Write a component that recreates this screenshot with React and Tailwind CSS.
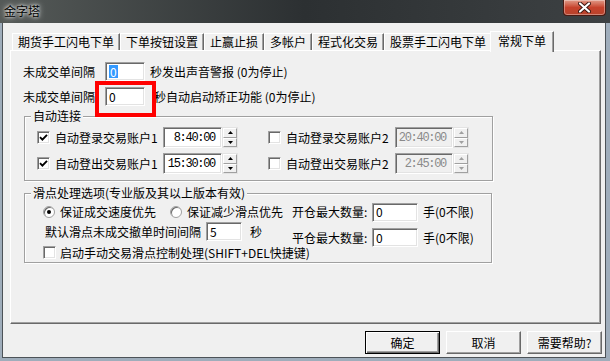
import React from "react";

const sunken =
  "bg-white border border-t-[#a0a0a0] border-l-[#a0a0a0] border-b-white border-r-white shadow-[inset_1px_1px_0_#696969,inset_-1px_-1px_0_#e3e3e3]";

function Check({ checked }) {
  return (
    <span className={"w-[13px] h-[13px] flex items-center justify-center shrink-0 " + sunken}>
      {checked && (
        <svg width="9" height="9" viewBox="0 0 9 9">
          <path d="M1 4.2 L3.4 6.6 L8 1.8" stroke="#000" strokeWidth="1.9" fill="none" />
        </svg>
      )}
    </span>
  );
}

function Radio({ checked }) {
  return (
    <span className="w-[12px] h-[12px] rounded-full bg-white border border-[#a0a0a0] shadow-[inset_1px_1px_0_#696969] flex items-center justify-center shrink-0">
      {checked && <span className="w-[4px] h-[4px] rounded-full bg-black" />}
    </span>
  );
}

function Spin({ disabled }) {
  const c = disabled ? "#a0a0a0" : "#000";
  const btn =
    "flex-1 flex items-center justify-center bg-[#f0f0f0] border border-t-white border-l-white border-r-[#a0a0a0] border-b-[#a0a0a0]";
  return (
    <div className="w-[16px] h-[21px] flex flex-col shrink-0 border border-[#e3e3e3]">
      <div className={btn}>
        <svg width="5" height="3" viewBox="0 0 5 3">
          <path d="M0 3 L2.5 0 L5 3 Z" fill={c} />
        </svg>
      </div>
      <div className={btn}>
        <svg width="5" height="3" viewBox="0 0 5 3">
          <path d="M0 0 L2.5 3 L5 0 Z" fill={c} />
        </svg>
      </div>
    </div>
  );
}

function TimeBox({ value, disabled, w }) {
  return (
    <div
      className={
        "h-[21px] flex items-center justify-end pr-[6px] font-['Liberation_Mono',monospace] text-[12px] tracking-[-1.3px] border border-t-[#a0a0a0] border-l-[#a0a0a0] border-b-white border-r-white shadow-[inset_1px_1px_0_#696969,inset_-1px_-1px_0_#e3e3e3] " +
        (disabled ? "bg-[#f0f0f0] text-[#8a8a8a] " : "bg-white text-black ") +
        w
      }
    >
      {value}
    </div>
  );
}

function Tab({ label, active }) {
  if (active) {
    return (
      <div className="relative z-10 h-[21px] -mb-[2px] -ml-[2px] -mr-[2px] px-[7px] pt-[2px] bg-[#f0f0f0] border border-b-0 border-t-white border-l-white border-r-[#696969] shadow-[inset_-1px_0_0_#a0a0a0] leading-[14px]">
        {label}
      </div>
    );
  }
  return (
    <div className="h-[17px] px-[5px] pt-[1px] bg-[#f0f0f0] border border-b-0 border-t-white border-l-white border-r-[#696969] shadow-[inset_-1px_0_0_#a0a0a0] leading-[14px]">
      {label}
    </div>
  );
}

function Button({ label, def }) {
  return (
    <div
      className={
        "w-[75px] h-[23px] flex items-center justify-center bg-[#f0f0f0] leading-[14px] " +
        (def
          ? "border border-[#000] shadow-[inset_1px_1px_0_#fff,inset_-1px_-1px_0_#696969,inset_-2px_-2px_0_#a0a0a0]"
          : "border border-t-white border-l-white border-b-[#696969] border-r-[#696969] shadow-[inset_-1px_-1px_0_#a0a0a0]")
      }
    >
      {label}
    </div>
  );
}

export default function App() {
  return (
    <div className="w-[610px] h-[361px] overflow-hidden bg-[#9fadbb] flex flex-col text-[12px] leading-[14px] text-black font-['Noto_Sans_CJK_SC','Liberation_Sans',sans-serif]">
      {/* Title bar */}
      <div className="h-[23px] flex justify-between bg-gradient-to-r from-[#555a58] via-[#2c3032] to-[#3d4143] shrink-0">
        <span className="pl-[4px] pt-[3px] leading-[16px] [text-shadow:0_0_6px_#fff,0_0_3px_#fff]">金字塔</span>
        <div className="w-[43px] h-[16px] mr-[4px] rounded-b-[4px] border border-t-0 border-[#4a1a12] bg-gradient-to-b from-[#e09a88] via-[#c6422c] to-[#b8432c] shadow-[inset_0_0_0_1px_rgba(255,255,255,0.35)] flex items-center justify-center">
          <svg width="13" height="11" viewBox="0 0 13 11">
            <path d="M2 1.5 L11 9.5 M11 1.5 L2 9.5" stroke="#3a1510" strokeWidth="4" strokeLinecap="round" />
            <path d="M2 1.5 L11 9.5 M11 1.5 L2 9.5" stroke="#fff" strokeWidth="2.2" strokeLinecap="round" />
          </svg>
        </div>
      </div>

      {/* Client area */}
      <div className="ml-[2px] w-[604px] h-[335px] bg-[#f0f0f0] border-l border-r border-b border-[#4d5358] flex flex-col shrink-0">
        {/* Tabs */}
        <div className="h-[27px] flex items-end pl-[9px] shrink-0">
          <Tab label="期货手工闪电下单" />
          <Tab label="下单按钮设置" />
          <Tab label="止赢止损" />
          <Tab label="多帐户" />
          <Tab label="程式化交易" />
          <Tab label="股票手工闪电下单" />
          <Tab label="常规下单" active />
        </div>

        {/* Panel */}
        <div className="relative ml-[7px] w-[591px] h-[274px] border border-t-white border-l-white border-r-[#696969] border-b-[#696969] shadow-[inset_-1px_-1px_0_#a0a0a0] flex flex-col pt-[11px] pl-[12px] shrink-0">
          {/* Row 1 */}
          <div className="h-[19px] flex items-center">
            <span className="w-[82px]">未成交单间隔</span>
            <div className={"w-[40px] h-[19px] flex items-center pl-[3px] " + sunken}>
              <span className="bg-[#3399ff] text-white px-[1px] leading-[13px]">0</span>
            </div>
            <span className="ml-[5px]">秒发出声音警报 (0为停止)</span>
          </div>
          {/* Row 2 */}
          <div className="h-[19px] mt-[6px] flex items-center">
            <span className="w-[82px]">未成交单间隔</span>
            <div className={"w-[40px] h-[19px] flex items-center pl-[3px] " + sunken}>0</div>
            <span className="ml-[9px]">秒自动启动矫正功能 (0为停止)</span>
          </div>

          {/* Group 1 */}
          <div className="relative ml-[1px] mt-[10px] w-[469px] h-[65px] border border-[#a0a0a0] shadow-[inset_1px_1px_0_#fff,1px_1px_0_#fff] pt-[10px] pl-[12px] flex flex-col">
            <span className="absolute -top-[8px] left-[6px] px-[2px] bg-[#f0f0f0]">自动连接</span>
            <div className="h-[21px] flex items-center">
              <Check checked />
              <span className="ml-[5px] w-[108px]">自动登录交易账户1</span>
              <TimeBox value="8:40:00" w="w-[59px]" />
              <Spin />
              <span className="ml-[30px]"><Check /></span>
              <span className="ml-[5px] w-[109px]">自动登录交易账户2</span>
              <TimeBox value="20:40:00" w="w-[58px]" disabled />
              <Spin disabled />
            </div>
            <div className="h-[21px] mt-[5px] flex items-center">
              <Check checked />
              <span className="ml-[5px] w-[108px]">自动登出交易账户1</span>
              <TimeBox value="15:30:00" w="w-[59px]" />
              <Spin />
              <span className="ml-[30px]"><Check /></span>
              <span className="ml-[5px] w-[109px]">自动登出交易账户2</span>
              <TimeBox value="2:45:00" w="w-[58px]" disabled />
              <Spin disabled />
            </div>
          </div>

          {/* Group 2 */}
          <div className="relative ml-[1px] mt-[12px] w-[468px] h-[70px] border border-[#a0a0a0] shadow-[inset_1px_1px_0_#fff,1px_1px_0_#fff] pt-[8px] pl-[18px] flex">
            <span className="absolute -top-[8px] left-[6px] px-[2px] bg-[#f0f0f0]">滑点处理选项(专业版及其以上版本有效)</span>
            <div className="w-[249px] flex flex-col">
              <div className="h-[20px] flex items-center whitespace-nowrap">
                <Radio checked />
                <span className="ml-[5px]">保证成交速度优先</span>
                <span className="ml-[14px]"><Radio /></span>
                <span className="ml-[5px]">保证减少滑点优先</span>
              </div>
              <div className="h-[19px] flex items-center whitespace-nowrap">
                <span className="ml-[2px]">默认滑点未成交撤单时间间隔</span>
                <div className={"ml-[5px] w-[36px] h-[19px] flex items-center pl-[3px] " + sunken}>5</div>
                <span className="ml-[8px]">秒</span>
              </div>
              <div className="h-[15px] mt-[4px] flex items-center whitespace-nowrap">
                <Check />
                <span className="ml-[4px]">启动手动交易滑点控制处理(SHIFT+DEL快捷键)</span>
              </div>
            </div>
            <div className="flex flex-col">
              <div className="h-[20px] flex items-center whitespace-nowrap">
                <span className="w-[80px]">开仓最大数量:</span>
                <div className={"w-[46px] h-[19px] flex items-center pl-[3px] " + sunken}>0</div>
                <span className="ml-[5px]">手(0不限)</span>
              </div>
              <div className="h-[19px] mt-[6px] flex items-center whitespace-nowrap">
                <span className="w-[80px]">平仓最大数量:</span>
                <div className={"w-[46px] h-[19px] flex items-center pl-[3px] " + sunken}>0</div>
                <span className="ml-[5px]">手(0不限)</span>
              </div>
            </div>
          </div>

          {/* red annotation box */}
          <div className="absolute left-[84px] top-[30px] w-[61px] h-[36px] border-[4px] border-[#ff0000] pointer-events-none" />
        </div>

        {/* Buttons */}
        <div className="mt-[7px] flex justify-end gap-[6px] pr-[3px]">
          <Button label="确定" def />
          <Button label="取消" />
          <Button label="需要帮助?" />
        </div>
      </div>
    </div>
  );
}
